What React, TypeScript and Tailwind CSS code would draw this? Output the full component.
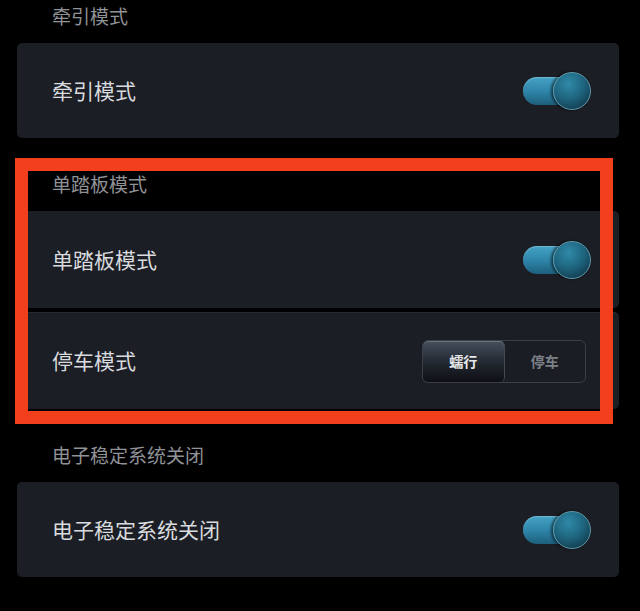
import React from "react";

const font = { fontFamily: '"Noto Sans CJK SC", "Noto Sans", sans-serif' };

function Toggle() {
  return (
    <div className="relative w-[68px] h-[38px] shrink-0">
      <div className="absolute left-0 top-[5px] w-[56px] h-[28px] rounded-full bg-gradient-to-b from-[#45a3c6] via-[#2f86aa] to-[#1d5f7c] shadow-[inset_0_1px_1px_rgba(255,255,255,0.25)]" />
      <div className="absolute right-0 top-0 w-[38px] h-[38px] rounded-full bg-[radial-gradient(circle_at_40%_30%,#2f8aa8_0%,#1f6680_45%,#0c2a38_100%)] border border-[#5e97a8] shadow-[-2px_0_3px_rgba(0,0,0,0.6)]" />
    </div>
  );
}

function Segmented() {
  return (
    <div className="flex w-[164px] h-[43px] rounded-[6px] border border-[#3b4048] bg-[#1a1d23] overflow-hidden mr-[5px] text-[14px]">
      <div className="flex-1 flex items-center justify-center rounded-[5px] border-r border-[#444a53] bg-gradient-to-b from-[#46505e] via-[#242a33] to-[#0d0f13] text-[#e6e8ea] font-bold shadow-[inset_0_1px_0_rgba(255,255,255,0.2)]">
        蠕行
      </div>
      <div className="flex-1 flex items-center justify-center text-[#7d8187] font-bold">
        停车
      </div>
    </div>
  );
}

function Header({ children }: { children: React.ReactNode }) {
  return (
    <div className="h-[43px] pl-[35px] pt-[3px] text-[19px] leading-[26px] text-[#8f9296]">
      {children}
    </div>
  );
}

function Row({ label, h, children, className = "" }: { label: string; h: string; children: React.ReactNode; className?: string }) {
  return (
    <div className={`flex items-center justify-between pl-[35px] pr-[28px] bg-[#1b1e25] rounded-[5px] ${h} ${className}`}>
      <span className="text-[21px] text-[#d9dbde]">{label}</span>
      {children}
    </div>
  );
}

export default function App() {
  return (
    <div className="relative w-[640px] h-[611px] bg-black overflow-hidden" style={font}>
      <div className="flex flex-col gap-[30px] pl-[17px] pr-[21px]">
        <div className="flex flex-col">
          <Header>牵引模式</Header>
          <Row label="牵引模式" h="h-[95px]">
            <Toggle />
          </Row>
        </div>
        <div className="flex flex-col">
          <Header>单踏板模式</Header>
          <div className="flex flex-col gap-[4px]">
            <Row label="单踏板模式" h="h-[97px]">
              <Toggle />
            </Row>
            <Row label="停车模式" h="h-[97px]" className="border-t border-[#262a32]">
              <Segmented />
            </Row>
          </div>
        </div>
        <div className="flex flex-col">
          <Header>电子稳定系统关闭</Header>
          <Row label="电子稳定系统关闭" h="h-[95px]">
            <Toggle />
          </Row>
        </div>
      </div>
      <div className="absolute left-[15px] top-[158px] w-[598px] h-[266px] border-[13px] border-[#f2401d] pointer-events-none" />
    </div>
  );
}
